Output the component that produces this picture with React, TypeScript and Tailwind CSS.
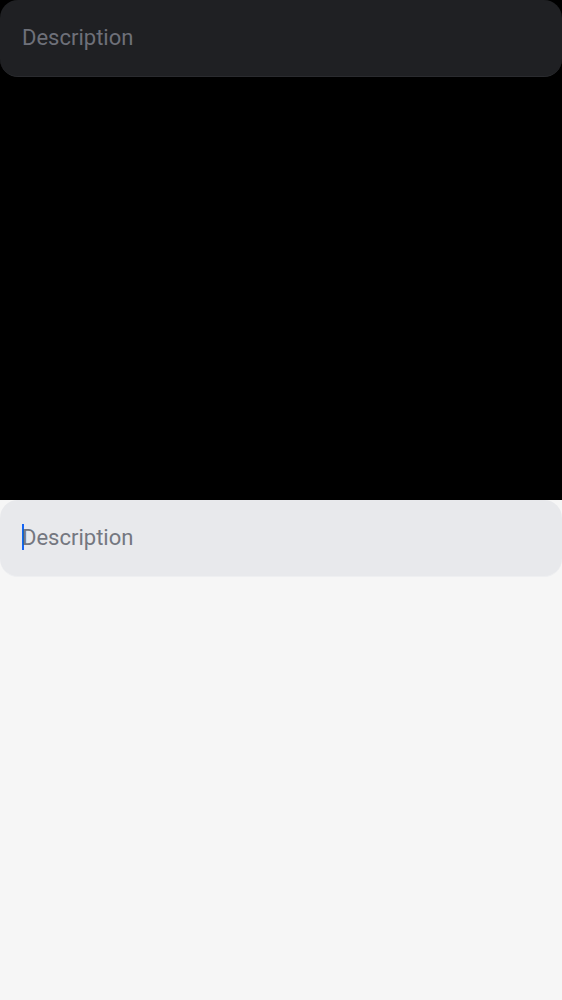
export default function App() {
  return (
    <div className="w-[562px] h-[1000px] flex flex-col" style={{ fontFamily: "Roboto, 'Liberation Sans', sans-serif" }}>
      {/* Dark theme */}
      <div className="h-[500px] bg-black">
        <div className="h-[77px] rounded-[18px] bg-[#1f2023] border-b border-[#2a2b2f] flex items-center px-[22px] pb-[2px]">
          <span className="text-[22px] text-[#6e7079]">Description</span>
        </div>
      </div>

      {/* Light theme */}
      <div className="h-[500px] bg-[#f6f6f6]">
        <div className="h-[77px] rounded-[18px] bg-[#e8e9ec] border-b border-[#eeeff1] flex items-center px-[22px] pb-[2px]">
          <span className="w-[2px] h-[26px] bg-[#1565f5] -mr-[2px]" />
          <span className="text-[22px] text-[#747780]">Description</span>
        </div>
      </div>
    </div>
  );
}
